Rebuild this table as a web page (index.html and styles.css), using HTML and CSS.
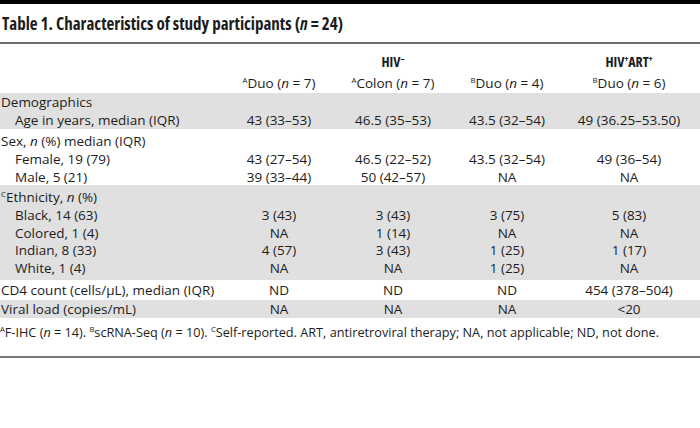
FILE: index.html
```html
<!DOCTYPE html>
<html lang="en">
<head>
<meta charset="utf-8">
<title>Table 1</title>
<link rel="stylesheet" href="styles.css">
</head>
<body>
<div class="topbar"></div>
<h1 class="title">Table 1. Characteristics of study participants (<i>n</i> = 24)</h1>
<table class="data">
  <colgroup>
    <col class="c-label"><col class="c-num"><col class="c-num"><col class="c-num4"><col class="c-num5">
  </colgroup>
  <thead>
    <tr class="h1">
      <th></th>
      <th colspan="3">HIV<sup>–</sup></th>
      <th class="last-col">HIV<sup>+</sup>ART<sup>+</sup></th>
    </tr>
    <tr class="h2">
      <th></th>
      <th><sup>A</sup>Duo (<i>n</i> = 7)</th>
      <th><sup>A</sup>Colon (<i>n</i> = 7)</th>
      <th><sup>B</sup>Duo (<i>n</i> = 4)</th>
      <th class="last-col"><sup>B</sup>Duo (<i>n</i> = 6)</th>
    </tr>
  </thead>
  <tbody class="grp grey g-demo">
    <tr class="first"><td class="lab">Demographics</td><td></td><td></td><td></td><td class="last-col"></td></tr>
    <tr class="last"><td class="lab ind">Age in years, median (IQR)</td><td>43 (33–53)</td><td>46.5 (35–53)</td><td>43.5 (32–54)</td><td class="last-col">49 (36.25–53.50)</td></tr>
  </tbody>
  <tbody class="grp g-sex">
    <tr class="first"><td class="lab">Sex, <i>n</i> (%) median (IQR)</td><td></td><td></td><td></td><td class="last-col"></td></tr>
    <tr><td class="lab ind">Female, 19 (79)</td><td>43 (27–54)</td><td>46.5 (22–52)</td><td>43.5 (32–54)</td><td class="last-col">49 (36–54)</td></tr>
    <tr class="last"><td class="lab ind">Male, 5 (21)</td><td>39 (33–44)</td><td>50 (42–57)</td><td>NA</td><td class="last-col">NA</td></tr>
  </tbody>
  <tbody class="grp grey g-eth">
    <tr class="first"><td class="lab"><sup>C</sup>Ethnicity, <i>n</i> (%)</td><td></td><td></td><td></td><td class="last-col"></td></tr>
    <tr><td class="lab ind">Black, 14 (63)</td><td>3 (43)</td><td>3 (43)</td><td>3 (75)</td><td class="last-col">5 (83)</td></tr>
    <tr><td class="lab ind">Colored, 1 (4)</td><td>NA</td><td>1 (14)</td><td>NA</td><td class="last-col">NA</td></tr>
    <tr><td class="lab ind">Indian, 8 (33)</td><td>4 (57)</td><td>3 (43)</td><td>1 (25)</td><td class="last-col">1 (17)</td></tr>
    <tr class="last"><td class="lab ind">White, 1 (4)</td><td>NA</td><td>NA</td><td>1 (25)</td><td class="last-col">NA</td></tr>
  </tbody>
  <tbody class="grp g-cd4">
    <tr class="first last"><td class="lab">CD4 count (cells/μL), median (IQR)</td><td>ND</td><td>ND</td><td>ND</td><td class="last-col">454 (378–504)</td></tr>
  </tbody>
  <tbody class="grp grey g-vl">
    <tr class="first last"><td class="lab">Viral load (copies/mL)</td><td>NA</td><td>NA</td><td>NA</td><td class="last-col">&lt;20</td></tr>
  </tbody>
</table>
<div class="notes">
  <p class="foot"><sup>A</sup>F-IHC (<i>n</i> = 14). <sup>B</sup>scRNA-Seq (<i>n</i> = 10). <sup>C</sup>Self-reported. ART, antiretroviral therapy; NA, not applicable; ND, not done.</p>
</div>
</body>
</html>
```
FILE: styles.css
```css
html, body {
  margin: 0;
  padding: 0;
  background: #ffffff;
}
body {
  width: 700px;
  color: #1c1c1c;
  font-family: "Open Sans", "Noto Sans", "DejaVu Sans", sans-serif;
}
.topbar {
  height: 4px;
  background: #000;
}
.title {
  margin: 10px 0 0 0;
  padding: 0 0 0 2px;
  font-family: "Open Sans", sans-serif;
  font-stretch: 75%;
  font-weight: 700;
  font-size: 17px;
  line-height: 20px;
  height: 28px;
  border-bottom: 2px solid #6e6e6e;
}
.title i { font-style: italic; }

sup {
  font-size: 0.58em;
  line-height: 0;
  vertical-align: 0.6em;
}

.data {
  width: 700px;
  border-collapse: collapse;
  table-layout: fixed;
  font-size: 13.5px;
}
.c-label { width: 222px; }
.c-num { width: 114px; }
.c-num4 { width: 114px; }
.c-num5 { width: 136px; }

.data th, .data td {
  padding: 2px 0 0 0;
  line-height: 15.8px;
  text-align: center;
  white-space: nowrap;
  font-weight: 400;
}
.data .last-col {
  padding-right: 6px;
}
.data .h1 th {
  font-weight: 700;
  font-stretch: 75%;
  font-size: 14px;
  padding-top: 10px;
  padding-bottom: 4.4px;
}
.data .h2 th {
  padding-bottom: 1px;
}
.data td.lab {
  text-align: left;
  padding-left: 1px;
}
.data td.ind {
  padding-left: 15px;
}
.grey td { background: #e0e0e0; }

.g-demo .first td { padding-top: 2.5px; }
.g-sex .first td { padding-top: 5px; }
.g-eth .first td { padding-top: 4.5px; }
.g-eth .last td { padding-bottom: 3.5px; }
.g-cd4 td { padding-top: 2.2px; padding-bottom: 1.2px; }
.g-vl td { padding-top: 2px; padding-bottom: 0.5px; }

.notes {
  padding: 6px 0 16px 0;
  border-bottom: 2px solid #777777;
}
.foot {
  margin: 0;
  font-size: 12.7px;
  line-height: 16px;
  white-space: nowrap;
}
.foot sup { font-size: 0.6em; }
```
